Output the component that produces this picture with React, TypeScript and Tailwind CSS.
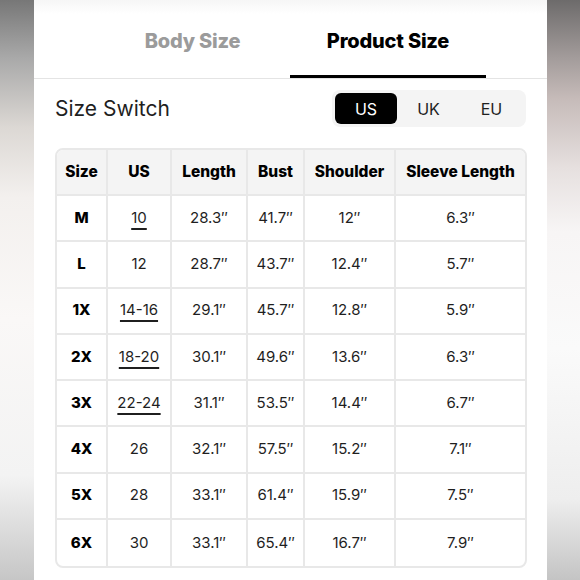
const rows = [
  { size: "M", us: "10", link: true, length: "28.3″", bust: "41.7″", shoulder: "12″", sleeve: "6.3″" },
  { size: "L", us: "12", link: false, length: "28.7″", bust: "43.7″", shoulder: "12.4″", sleeve: "5.7″" },
  { size: "1X", us: "14-16", link: true, length: "29.1″", bust: "45.7″", shoulder: "12.8″", sleeve: "5.9″" },
  { size: "2X", us: "18-20", link: true, length: "30.1″", bust: "49.6″", shoulder: "13.6″", sleeve: "6.3″" },
  { size: "3X", us: "22-24", link: true, length: "31.1″", bust: "53.5″", shoulder: "14.4″", sleeve: "6.7″" },
  { size: "4X", us: "26", link: false, length: "32.1″", bust: "57.5″", shoulder: "15.2″", sleeve: "7.1″" },
  { size: "5X", us: "28", link: false, length: "33.1″", bust: "61.4″", shoulder: "15.9″", sleeve: "7.5″" },
  { size: "6X", us: "30", link: false, length: "33.1″", bust: "65.4″", shoulder: "16.7″", sleeve: "7.9″" },
];

const headers = ["Size", "US", "Length", "Bust", "Shoulder", "Sleeve Length"];

export default function App() {
  return (
    <div
      className="flex w-[580px] h-[580px] overflow-hidden bg-white text-[#1f1f1f]"
      style={{ fontFamily: "Inter, 'Liberation Sans', sans-serif" }}
    >
      {/* left backdrop */}
      <div className="w-[34px] h-full bg-[linear-gradient(180deg,#777_0%,#a9a9a9_10%,#dcd8d4_22%,#f3f0ee_34%,#faf8f7_55%,#f3f3f3_82%,#c6c6c6_100%)]" />

      {/* sheet */}
      <div className="w-[513px] h-full flex flex-col bg-white">
        {/* tabs */}
        <div className="h-[79px] flex pl-[61px] border-b border-[#e4e4e4] bg-[linear-gradient(180deg,#f6f6f6_0px,#fff_14px)]">
          <div className="w-[195px] flex items-center justify-center pt-[3px] text-[20px] font-extrabold tracking-[-0.2px] text-[#9b9b9b]">
            Body Size
          </div>
          <div className="w-[196px] flex items-center justify-center pt-[6px] border-b-[3px] border-black text-[20px] font-extrabold tracking-[-0.2px] text-black">
            Product Size
          </div>
        </div>

        {/* size switch */}
        <div className="flex items-center justify-between pl-[21px] pr-[21px] pt-[11px] mb-[21px]">
          <span className="text-[21px]">Size Switch</span>
          <div className="flex p-[3px] rounded-lg bg-[#f4f4f4] text-[16px]">
            <div className="w-[62px] h-[31px] flex items-center justify-center rounded-md bg-black text-white">US</div>
            <div className="w-[63px] h-[31px] flex items-center justify-center">UK</div>
            <div className="w-[63px] h-[31px] flex items-center justify-center">EU</div>
          </div>
        </div>

        {/* table */}
        <div className="pl-[21px] pr-[20px]">
          <div className="border-2 border-[#e8e8e8] rounded-lg overflow-hidden">
            <div className="grid grid-cols-[51px_64px_76px_57px_91px_129px] text-[15px]">
              {headers.map((h, i) => (
                <div
                  key={h}
                  className={`h-[46px] flex items-center justify-center text-[15.5px] font-extrabold text-black bg-[#f4f4f4] border-b-2 border-[#e8e8e8] ${
                    i < headers.length - 1 ? "border-r-2" : ""
                  }`}
                >
                  {h}
                </div>
              ))}
              {rows.map((r, ri) => {
                const cells = [r.size, r.us, r.length, r.bust, r.shoulder, r.sleeve];
                return cells.map((c, ci) => (
                  <div
                    key={`${ri}-${ci}`}
                    className={`h-[46.25px] flex items-center justify-center border-[#e8e8e8] ${
                      ci < 5 ? "border-r-2" : ""
                    } ${ri < rows.length - 1 ? "border-b-2" : ""} ${ci === 0 ? "font-extrabold text-black" : ""}`}
                  >
                    {ci === 1 && r.link ? (
                      <span className="underline underline-offset-[5px] decoration-[1.5px]">{c}</span>
                    ) : (
                      c
                    )}
                  </div>
                ));
              })}
            </div>
          </div>
        </div>
      </div>

      {/* right backdrop */}
      <div className="w-[33px] h-full bg-[linear-gradient(180deg,#6d6b6b_0%,#a39c9b_10%,#c6bbb9_17%,#e6e0df_29%,#f7f5f5_40%,#fafafa_60%,#eeeeee_86%,#c4c4c4_100%)]" />
    </div>
  );
}
